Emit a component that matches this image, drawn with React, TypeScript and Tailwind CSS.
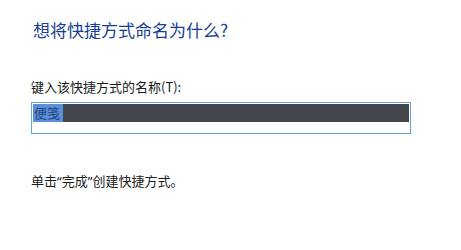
import React from "react";

export default function App() {
  return (
    <div
      className="w-[461px] h-[250px] bg-white overflow-hidden"
      style={{ fontFamily: '"Microsoft YaHei", "Noto Sans CJK SC", "Noto Sans", sans-serif' }}
    >
      <div className="pl-[33px] pt-[20px]">
        <h1 className="text-[17px] leading-[20px] text-[#163e96] font-normal">想将快捷方式命名为什么?</h1>
      </div>
      <div className="pl-[31px] pt-[39px]">
        <div className="text-[13px] leading-[16px] text-[#1a1a1a]">键入该快捷方式的名称(T):</div>
        <div className="mt-[7px] w-[380px] h-[32px] border border-[#6aa3de] bg-white pt-[1px] pl-[1px] pr-[1px]">
          <div className="h-[18px] bg-[#44464e] flex items-center">
            <span className="h-[18px] w-[30px] bg-[#5b8fd8] text-[#24457f] text-[13px] leading-[18px] flex items-center justify-start pl-[1px]">
              便笺
            </span>
          </div>
        </div>
        <div className="mt-[39px] text-[13px] leading-[16px] text-[#1a1a1a]">
          单击<span className="font-['Noto_Sans',sans-serif]">“</span>完成<span className="font-['Noto_Sans',sans-serif]">”</span>创建快捷方式。
        </div>
      </div>
    </div>
  );
}
